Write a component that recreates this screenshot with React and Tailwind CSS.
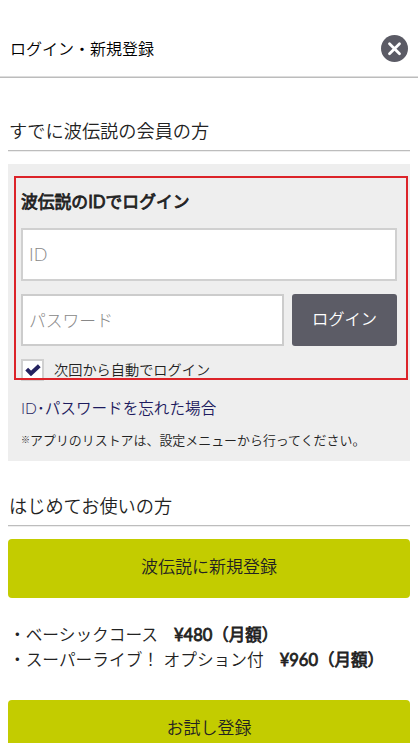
import React from "react";

function SectionTitle({ children }) {
  return (
    <h2 className="h-[38px] border-b border-[#bdbdbd] pl-px text-[18.2px] leading-[36px] font-[350] whitespace-nowrap shadow-[0_1px_0_#eeeeee]">
      {children}
    </h2>
  );
}

function Plan({ name, price }) {
  return (
    <li className="flex h-[25px] items-center text-[16.7px] leading-[25px] whitespace-pre">
      <span className="font-[350]">・{name}</span>
      <strong className="ml-4 text-[16.5px] font-normal [-webkit-text-stroke:0.8px_#222222]">{price}</strong>
    </li>
  );
}

export default function App() {
  return (
    <div className="h-[743px] w-[418px] overflow-hidden bg-white font-['Lato','Noto_Sans_CJK_JP',sans-serif] text-[#222222]">
      <header className="flex h-[78px] items-center justify-between border-b border-[#bcbcbc] pt-[20px] pr-[10px] pl-[10px] shadow-[inset_0_-1px_0_#dddddd]">
        <h1 className="text-[16px] leading-6 font-[350] whitespace-nowrap text-[#000000]">ログイン・新規登録</h1>
        <button aria-label="閉じる" className="mb-px h-[27px] w-[27px]">
          <svg viewBox="0 0 27 27" className="h-[27px] w-[27px]">
            <circle cx="13.5" cy="13.5" r="13.5" fill="#5b5b65" />
            <path d="M8.5 8.7 L18.5 18.7 M18.5 8.7 L8.5 18.7" stroke="#fff" strokeWidth="2.8" strokeLinecap="round" />
          </svg>
        </button>
      </header>

      <main className="px-2 pt-[35px]">
        <SectionTitle>すでに波伝説の会員の方</SectionTitle>

        <section className="relative mt-[13px] h-[297px] w-[402px] bg-[#eeeeee] px-[13px] pt-[23px]">
          <h3 className="h-7 text-[16.8px] leading-[29px] font-normal whitespace-nowrap [-webkit-text-stroke:0.8px_#222222]">波伝説のIDでログイン</h3>
          <div className="mt-[13px] flex h-[53px] w-[376px] items-center border-2 border-[#d0d0d0] bg-white pb-px pl-[6px] text-[18px] font-light text-[#888888]">
            ID
          </div>
          <div className="mt-[13px] flex w-[376px] justify-between">
            <div className="flex h-[52px] w-[263px] items-center border-2 border-[#cccccc] bg-white pt-[2px] pl-[6px] text-[16.8px] font-light text-[#888888]">
              パスワード
            </div>
            <button className="h-[52px] w-[105px] rounded-[3px] bg-[#5c5c66] pb-px text-[16.3px] font-[350] text-white">
              ログイン
            </button>
          </div>
          <div className="mt-[13px] flex h-[22px] items-center">
            <span className="flex h-[22px] w-[23px] items-center justify-center border-2 border-[#d0d0d0] bg-white pl-px">
              <svg viewBox="0 0 16 12" className="h-3 w-4">
                <path d="M1.7 5.2 L6 9.5 L14.3 1.7" fill="none" stroke="#252360" strokeWidth="4" />
              </svg>
            </span>
            <span className="ml-[10px] text-[14.2px] leading-[22px] font-[350] whitespace-nowrap">次回から自動でログイン</span>
          </div>
          <a className="mt-[15px] block h-6 text-[15.6px] leading-6 font-[350] whitespace-nowrap text-[#1d1b5e]">ID･パスワードを忘れた場合</a>
          <p className="mt-[10px] flex h-5 items-center text-[12.95px] leading-5 font-[350] whitespace-nowrap">
            <span className="w-[9px] text-[9px]">※</span>アプリのリストアは、設定メニューから行ってください。
          </p>
          <div className="pointer-events-none absolute top-3 left-[6px] h-[204px] w-[394px] border-2 border-[#dc2329]" />
        </section>

        <div className="mt-[27px]">
          <SectionTitle>はじめてお使いの方</SectionTitle>
        </div>
        <button className="mt-[13px] block h-[59px] w-[402px] rounded-[4px] bg-[#c3cc00] pb-1 text-[17px] font-[350]">
          波伝説に新規登録
        </button>
        <ul className="mt-[25px] pb-[27px] pl-px">
          <Plan name="ベーシックコース" price="¥480（月額）" />
          <Plan name="スーパーライブ！ オプション付" price="¥960（月額）" />
        </ul>
        <button className="block h-[59px] w-[402px] rounded-[4px] bg-[#c3cc00] pb-1 text-[17px] font-[350]">
          お試し登録
        </button>
      </main>
    </div>
  );
}
